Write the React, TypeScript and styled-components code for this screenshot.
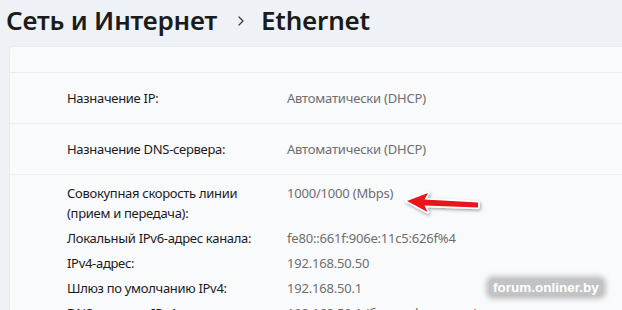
import styled, { createGlobalStyle } from "styled-components";
import React from "react";

const GlobalStyle = createGlobalStyle`
html, body {
    margin: 0;
    padding: 0;
    background: #eef2f6;
    overflow: hidden;
}
body {
    font-family: "Noto Sans", "Open Sans", sans-serif;
    -webkit-font-smoothing: antialiased;
}
`;

type Prop = { label: React.ReactNode; value: string };

const details: Prop[] = [
    { label: <>Совокупная скорость линии<br />(прием и передача):</>, value: "1000/1000 (Mbps)" },
    { label: "Локальный IPv6-адрес канала:", value: "fe80::661f:906e:11c5:626f%4" },
    { label: "IPv4-адрес:", value: "192.168.50.50" },
    { label: "Шлюз по умолчанию IPv4:", value: "192.168.50.1" },
    { label: "DNS-серверы IPv4:", value: "192.168.50.1 (без шифрования)" },
];

const arrowPath = "M7 14 L28 6 L24.5 12.5 L78 15.5 L78 20.5 L24.5 18.5 L27.5 25 Z";

function App() {
    return (
        <Page>
            <GlobalStyle />
            <Header>
                <Crumb>Сеть и Интернет</Crumb>
                <Chevron viewBox="0 0 6 10">
                    <path d="M1 1 L5 5 L1 9" fill="none" stroke="#3a3a3a" strokeWidth="1.2" strokeLinecap="round" strokeLinejoin="round" />
                </Chevron>
                <Crumb>Ethernet</Crumb>
            </Header>

            <Panel>
                <TopRow />
                <Row>
                    <Label>Назначение IP:</Label>
                    <Value>Автоматически (DHCP)</Value>
                </Row>
                <Row>
                    <Label>Назначение DNS-сервера:</Label>
                    <Value>Автоматически (DHCP)</Value>
                </Row>
                <Details>
                    {details.map((d, i) => (
                        <React.Fragment key={i}>
                            <Label>{d.label}</Label>
                            <Value>{d.value}</Value>
                        </React.Fragment>
                    ))}
                </Details>
            </Panel>

            <Arrow viewBox="0 0 86 32">
                <defs>
                    <filter id="glow" x="-20%" y="-50%" width="140%" height="200%">
                        <feDropShadow dx="1" dy="1.5" stdDeviation="1.5" floodColor="#444" floodOpacity="0.5" />
                    </filter>
                </defs>
                <g filter="url(#glow)">
                    <path d={arrowPath} fill="#fff" stroke="#fff" strokeWidth="3.5" strokeLinejoin="round" />
                    <path d={arrowPath} fill="#e8141a" />
                </g>
            </Arrow>

            <Watermark>forum.onliner.by</Watermark>
        </Page>
    );
}

const Page = styled.div`
position: relative;
width: 622px;
height: 310px;
overflow: hidden;
`;

const Header = styled.div`
display: flex;
align-items: center;
height: 46px;
padding: 0 0 6px 6px;
box-sizing: border-box;
`;

const Crumb = styled.span`
font-size: 26px;
font-weight: 600;
color: #1b1b1b;
letter-spacing: -0.2px;
line-height: 34px;
`;

const Chevron = styled.svg`
width: 6px;
height: 10px;
margin: 2px 17px 0 21px;
`;

const Panel = styled.div`
margin-left: 9px;
background: #f9fafc;
border-top: 1px solid #e8ebef;
border-left: 1px solid #e8ebef;
border-top-left-radius: 5px;
height: 280px;
`;

const TopRow = styled.div`
height: 25px;
border-bottom: 1px solid #eceef2;
`;

const Row = styled.div`
display: grid;
grid-template-columns: 220px 1fr;
align-items: center;
height: 51px;
padding: 0 0 0 57px;
border-bottom: 1px solid #eceef2;
box-sizing: border-box;
`;

const Details = styled.div`
display: grid;
grid-template-columns: 220px 1fr;
align-items: start;
row-gap: 5px;
padding: 8px 0 0 57px;
`;

const Label = styled.div`
font-size: 13px;
line-height: 20px;
letter-spacing: -0.3px;
color: #1b1b1b;
`;

const Value = styled.div`
font-size: 13px;
line-height: 20px;
letter-spacing: -0.2px;
color: #6e6e6e;
`;

const Arrow = styled.svg`
position: absolute;
left: 400px;
top: 187px;
width: 86px;
height: 32px;
`;

const Watermark = styled.div`
position: absolute;
left: 489px;
top: 279px;
font-family: "Liberation Sans", Arial, sans-serif;
font-weight: bold;
font-size: 13.5px;
color: #ffffff;
padding: 1px 4px;
background: rgba(150, 150, 150, 0.55);
box-shadow: 0 0 5px 3px rgba(150, 150, 150, 0.55);
border-radius: 4px;
`;

export default App
